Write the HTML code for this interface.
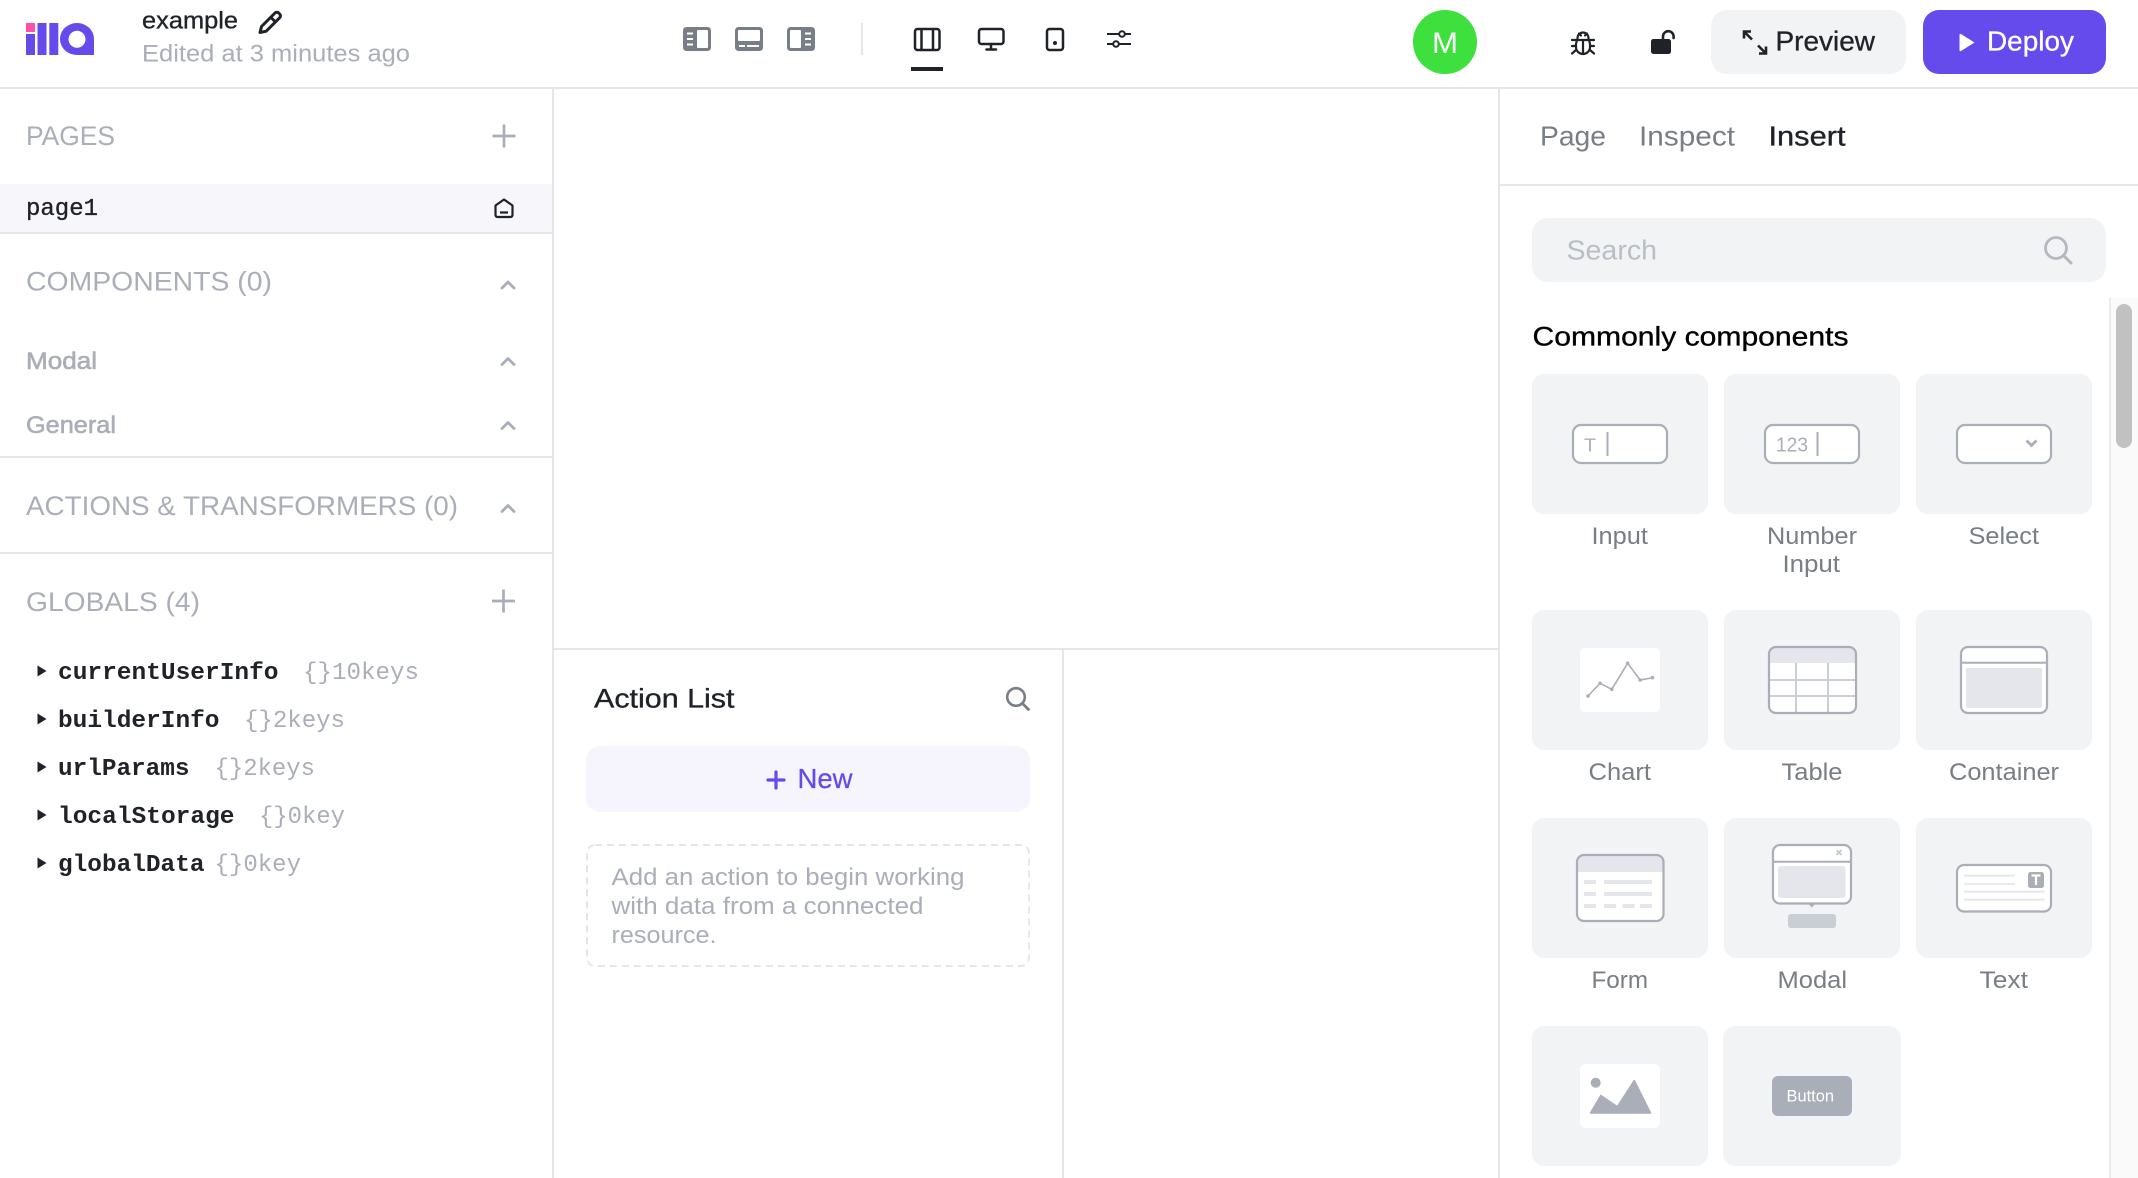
<!DOCTYPE html>
<html lang="en"><head><meta charset="utf-8"><title>example</title>
<style>
html,body{margin:0;padding:0;background:#fff;width:2138px;height:1178px;overflow:hidden}
svg{display:block}
text{font-family:"Liberation Sans",sans-serif;font-size:24.5px;fill:#1f2329;white-space:pre}
.m{font-family:"Liberation Mono",monospace;font-size:24px}
.g{fill:#a9aeb8}.d{fill:#787e85}
.b{fill:#a9aeb8;stroke:#a9aeb8;stroke-width:.6}
.s{font-size:26.5px}
.t{font-size:27.5px}
.md{stroke:#1f2329;stroke-width:.35}
.ln{fill:none;stroke:#a9aeb8;stroke-width:2.7;stroke-linejoin:round}
.ch{fill:none;stroke:#a9aeb8;stroke-width:2.8;stroke-linecap:round;stroke-linejoin:round}
.k{fill:none;stroke:#1f2329;stroke-width:2.5;stroke-linecap:round;stroke-linejoin:round}
.card{fill:#f2f3f5}
.o{fill:#fff;stroke:#a9aeb8;stroke-width:2.2}
</style></head><body>
<svg width="2138" height="1178" viewBox="0 0 2138 1178" xmlns="http://www.w3.org/2000/svg">
<rect width="2138" height="1178" fill="#fff"/>

<!-- structural lines -->
<rect x="0" y="87" width="2138" height="2" fill="#e5e6eb"/>
<rect x="552" y="89" width="2" height="1089" fill="#e5e6eb"/>
<rect x="1498" y="89" width="2" height="1089" fill="#e5e6eb"/>
<rect x="554" y="648" width="944" height="2" fill="#e5e6eb"/>
<rect x="1062" y="650" width="2" height="528" fill="#e5e6eb"/>
<rect x="1500" y="184" width="638" height="2" fill="#e5e6eb"/>
<rect x="0" y="456" width="552" height="2" fill="#e5e6eb"/>
<rect x="0" y="552" width="552" height="2" fill="#e5e6eb"/>

<!-- logo -->
<rect x="26" y="23" width="9" height="9" fill="#fc4fa8"/>
<rect x="26" y="34" width="9" height="21" fill="#654aec"/>
<rect x="37.500" y="23" width="9" height="32" fill="#654aec"/>
<rect x="49.300" y="23" width="9" height="32" fill="#654aec"/>
<path d="M77 23a17 16 0 0 1 17 16v16H77a17 16 0 0 1 0-32z" fill="#654aec"/>
<circle cx="77" cy="39.300" r="8.500" fill="#fff"/>

<!-- title -->
<text x="142" y="28.500" class="md" textLength="96" lengthAdjust="spacingAndGlyphs">example</text>
<text x="142" y="61.500" class="g" textLength="268" lengthAdjust="spacingAndGlyphs">Edited at 3 minutes ago</text>
<path d="M261.500 26.500l13.500-13.500a2.600 2.600 0 0 1 3.700 0l1 1a2.600 2.600 0 0 1 0 3.700l-13.500 13.500-6.200 1.300zM271 17.500l5 5" fill="none" stroke="#1f2329" stroke-width="3" stroke-linejoin="round"/>

<!-- layout toggles -->
<g>
<rect x="683" y="27" width="28" height="24" rx="3.500" fill="#787e85"/>
<rect x="697" y="30" width="11" height="18" rx="1" fill="#fff"/>
<path d="M687 33.500h6M687 39h6M687 44.500h6" stroke="#fff" stroke-width="2"/>
<rect x="735" y="27" width="28" height="24" rx="3.500" fill="#787e85"/>
<rect x="738" y="30" width="22" height="11" rx="1" fill="#fff"/>
<path d="M739 46h6M747 46h12" stroke="#fff" stroke-width="2"/>
<rect x="787" y="27" width="28" height="24" rx="3.500" fill="#787e85"/>
<rect x="790" y="30" width="11" height="18" rx="1" fill="#fff"/>
<path d="M805 33.500h6M805 39h6M805 44.500h6" stroke="#fff" stroke-width="2"/>
</g>
<rect x="861" y="23" width="2" height="32" fill="#e5e6eb"/>

<!-- viewport icons -->
<rect x="915" y="29" width="24.500" height="21" rx="2.500" class="k"/>
<path d="M921.500 29v21M933 29v21" class="k" style="stroke-linecap:butt"/>
<rect x="911" y="67" width="32" height="4" fill="#1f2329"/>
<rect x="979" y="29" width="24.500" height="15" rx="2.500" class="k"/>
<path d="M991 44v5M986.500 49.500h9.500" class="k"/>
<rect x="1047" y="29" width="16" height="21" rx="2.500" class="k"/>
<circle cx="1055" cy="43" r="2" fill="#1f2329"/>
<path d="M1107 34h12M1125 34h6M1107 44h6M1119 44h12" stroke="#1f2329" stroke-width="2"/>
<circle cx="1122" cy="34" r="2.800" fill="#fff" stroke="#1f2329" stroke-width="2"/>
<circle cx="1116" cy="44" r="2.800" fill="#fff" stroke="#1f2329" stroke-width="2"/>

<!-- avatar -->
<circle cx="1445" cy="42" r="32" fill="#3ee03e"/>
<text x="1432" y="53" textLength="26" lengthAdjust="spacingAndGlyphs" style="font-size:30px;fill:#fff">M</text>

<!-- bug -->
<g fill="none" stroke="#1f2329" stroke-width="2.200" stroke-linecap="round" stroke-linejoin="round">
<path d="M1577.500 40v-2a5.500 5.500 0 0 1 11 0v2"/>
<path d="M1577 40h12l1 4v3a7 7 0 0 1-14 0v-3z"/>
<path d="M1583 40v13M1572 40h5M1589 40h5M1572 46h4M1590 46h4M1576 50l-4 3.500M1590 50l4 3.500M1579 33.500l2 2M1587 33.500l-2 2"/>
</g>

<!-- lock -->
<rect x="1651" y="39" width="20" height="15" rx="2.500" fill="#1f2329"/>
<path d="M1663 39.500v-3a5.300 5.300 0 0 1 10.600 0v1.500" fill="none" stroke="#1f2329" stroke-width="2.600" stroke-linecap="round"/>

<!-- preview -->
<rect x="1711" y="10" width="195" height="64" rx="16" fill="#f2f3f5"/>
<path d="M1744 31.500l8 8M1744 38.500v-7h7M1766 53.500l-8-8M1766 46.500v7h-7" fill="none" stroke="#1f2329" stroke-width="2.600"/>
<text x="1775.500" y="50.500" class="t md" textLength="99.500" lengthAdjust="spacingAndGlyphs">Preview</text>

<!-- deploy -->
<rect x="1923" y="10" width="183" height="64" rx="16" fill="#654aec"/>
<path d="M1959.500 35a1 1 0 0 1 1.500-1l13.500 8.500-13.500 8.500a1 1 0 0 1-1.500-1z" fill="#fff"/>
<text x="1987" y="50.500" class="t" style="fill:#fff;stroke:#fff;stroke-width:.3" textLength="87" lengthAdjust="spacingAndGlyphs">Deploy</text>

<!-- left panel -->
<text x="26" y="145" class="g s" textLength="89" lengthAdjust="spacingAndGlyphs">PAGES</text>
<path d="M504 124.500v23M492.500 136h23" class="ln"/>
<rect x="0" y="184" width="552" height="48" fill="#f6f6fb"/>
<rect x="0" y="232" width="552" height="2" fill="#e5e6eb"/>
<text x="26" y="215" class="m md" textLength="72" lengthAdjust="spacingAndGlyphs">page1</text>
<path d="M495.500 205.500l8.500-6 8.500 6v9.500a2 2 0 0 1-2 2h-13a2 2 0 0 1-2-2zM500 212.500h8" fill="none" stroke="#1f2329" stroke-width="2.200" stroke-linejoin="round"/>

<text x="26" y="290.500" class="g s" textLength="246" lengthAdjust="spacingAndGlyphs">COMPONENTS (0)</text>
<path d="M502 288l6-6 6 6" class="ch"/>
<text x="26" y="369" class="b" textLength="71" lengthAdjust="spacingAndGlyphs">Modal</text>
<path d="M502 364.500l6-6 6 6" class="ch"/>
<text x="26" y="433" class="b" textLength="90" lengthAdjust="spacingAndGlyphs">General</text>
<path d="M502 428.500l6-6 6 6" class="ch"/>
<text x="26" y="515" class="g s" textLength="432" lengthAdjust="spacingAndGlyphs">ACTIONS &amp; TRANSFORMERS (0)</text>
<path d="M502 511.500l6-6 6 6" class="ch"/>
<text x="26" y="611" class="g s" textLength="174" lengthAdjust="spacingAndGlyphs">GLOBALS (4)</text>
<path d="M503.500 589.500v23M492 601h23" class="ln"/>

<!-- globals -->
<g fill="#1f2329">
<path d="M37.500 665.500l9 5.500-9 5.500z"/><path d="M37.500 713.500l9 5.500-9 5.500z"/><path d="M37.500 761.500l9 5.500-9 5.500z"/><path d="M37.500 809.500l9 5.500-9 5.500z"/><path d="M37.500 857.500l9 5.500-9 5.500z"/>
</g>
<text x="58" y="679" class="m" style="font-weight:700" textLength="220.500" lengthAdjust="spacingAndGlyphs">currentUserInfo</text>
<text x="58" y="727" class="m" style="font-weight:700" textLength="161.500" lengthAdjust="spacingAndGlyphs">builderInfo</text>
<text x="58" y="775" class="m" style="font-weight:700" textLength="131.500" lengthAdjust="spacingAndGlyphs">urlParams</text>
<text x="58" y="823" class="m" style="font-weight:700" textLength="176.500" lengthAdjust="spacingAndGlyphs">localStorage</text>
<text x="58" y="871" class="m" style="font-weight:700" textLength="146.500" lengthAdjust="spacingAndGlyphs">globalData</text>
<text x="303" y="679" class="m g" textLength="116" lengthAdjust="spacingAndGlyphs">{}10keys</text>
<text x="244" y="727" class="m g" textLength="101" lengthAdjust="spacingAndGlyphs">{}2keys</text>
<text x="214.500" y="775" class="m g" textLength="100.500" lengthAdjust="spacingAndGlyphs">{}2keys</text>
<text x="259" y="823" class="m g" textLength="86" lengthAdjust="spacingAndGlyphs">{}0key</text>
<text x="214.500" y="871" class="m g" textLength="86.500" lengthAdjust="spacingAndGlyphs">{}0key</text>

<!-- action list -->
<text x="594" y="707.500" class="md" style="font-size:27px" textLength="140.500" lengthAdjust="spacingAndGlyphs">Action List</text>
<circle cx="1016" cy="697" r="8.800" fill="none" stroke="#787e85" stroke-width="2.600"/>
<path d="M1022.500 703.500l6 6" stroke="#787e85" stroke-width="2.800" stroke-linecap="round"/>
<rect x="586" y="746" width="444" height="66" rx="14" fill="#f6f4fd"/>
<path d="M776 772v16M768 780h16" stroke="#654aec" stroke-width="3.200" stroke-linecap="round"/>
<text x="797.500" y="788" class="t" style="fill:#654aec;stroke:#654aec;stroke-width:.3" textLength="55" lengthAdjust="spacingAndGlyphs">New</text>
<rect x="587" y="845" width="442" height="121" rx="8" fill="none" stroke="#e5e6eb" stroke-width="2" stroke-dasharray="7 5"/>
<text x="611.500" y="885" class="g" textLength="353" lengthAdjust="spacingAndGlyphs">Add an action to begin working</text>
<text x="611.500" y="914" class="g" textLength="312" lengthAdjust="spacingAndGlyphs">with data from a connected</text>
<text x="611.500" y="943" class="g" textLength="105" lengthAdjust="spacingAndGlyphs">resource.</text>

<!-- right tabs -->
<text x="1540" y="145.500" class="t d" textLength="66" lengthAdjust="spacingAndGlyphs">Page</text>
<text x="1639" y="145.500" class="t d" textLength="96" lengthAdjust="spacingAndGlyphs">Inspect</text>
<text x="1768.500" y="145.500" class="t md" textLength="77" lengthAdjust="spacingAndGlyphs">Insert</text>

<!-- search -->
<rect x="1532" y="218" width="574" height="64" rx="16" fill="#f2f3f5"/>
<text x="1566.500" y="259.500" class="t" style="fill:#b9bec6" textLength="90.500" lengthAdjust="spacingAndGlyphs">Search</text>
<circle cx="2056" cy="248" r="10.500" fill="none" stroke="#b4b8bf" stroke-width="2.800"/>
<path d="M2064 256l7 7" stroke="#b4b8bf" stroke-width="3" stroke-linecap="round"/>

<!-- scrollbar -->
<rect x="2109" y="298" width="29" height="880" fill="#fafafa"/>
<rect x="2109" y="298" width="2" height="880" fill="#ebebeb"/>
<rect x="2116" y="304" width="16" height="144" rx="8" fill="#c1c1c1"/>

<text x="1532.500" y="345.700" class="md" style="font-size:27px;fill:#000;stroke:#000" textLength="316" lengthAdjust="spacingAndGlyphs">Commonly components</text>

<!-- cards -->
<rect class="card" x="1532" y="374" width="176" height="140" rx="12"/>
<rect class="card" x="1724" y="374" width="176" height="140" rx="12"/>
<rect class="card" x="1916" y="374" width="176" height="140" rx="12"/>
<rect class="card" x="1532" y="610" width="176" height="140" rx="12"/>
<rect class="card" x="1724" y="610" width="176" height="140" rx="12"/>
<rect class="card" x="1916" y="610" width="176" height="140" rx="12"/>
<rect class="card" x="1532" y="818" width="176" height="140" rx="12"/>
<rect class="card" x="1724" y="818" width="176" height="140" rx="12"/>
<rect class="card" x="1916" y="818" width="176" height="140" rx="12"/>
<rect class="card" x="1532" y="1026" width="176" height="140" rx="12"/>
<rect class="card" x="1723" y="1026" width="178" height="140" rx="12"/>

<!-- labels -->
<text x="1591.500" y="544" class="d" textLength="56.500" lengthAdjust="spacingAndGlyphs">Input</text>
<text x="1767" y="544" class="d" textLength="90" lengthAdjust="spacingAndGlyphs">Number</text>
<text x="1782.500" y="572" class="d" textLength="57.500" lengthAdjust="spacingAndGlyphs">Input</text>
<text x="1968.500" y="544" class="d" textLength="70.500" lengthAdjust="spacingAndGlyphs">Select</text>
<text x="1588.500" y="780" class="d" textLength="62.500" lengthAdjust="spacingAndGlyphs">Chart</text>
<text x="1781.500" y="780" class="d" textLength="61" lengthAdjust="spacingAndGlyphs">Table</text>
<text x="1949" y="780" class="d" textLength="110" lengthAdjust="spacingAndGlyphs">Container</text>
<text x="1591.500" y="988" class="d" textLength="56.500" lengthAdjust="spacingAndGlyphs">Form</text>
<text x="1777.500" y="988" class="d" textLength="69.500" lengthAdjust="spacingAndGlyphs">Modal</text>
<text x="1979.500" y="988" class="d" textLength="48.500" lengthAdjust="spacingAndGlyphs">Text</text>

<!-- input icon -->
<rect class="o" x="1573" y="425" width="94" height="38" rx="8"/>
<text x="1584" y="451.500" style="font-size:18px;fill:#a9aeb8" textLength="12" lengthAdjust="spacingAndGlyphs">T</text>
<path d="M1607.500 432v24" stroke="#a9aeb8" stroke-width="2"/>
<!-- number icon -->
<rect class="o" x="1765" y="425" width="94" height="38" rx="8"/>
<text x="1776" y="451.500" style="font-size:20px;fill:#a9aeb8" textLength="32" lengthAdjust="spacingAndGlyphs">123</text>
<path d="M1817.500 432v24" stroke="#a9aeb8" stroke-width="2"/>
<!-- select icon -->
<rect class="o" x="1957" y="425" width="94" height="38" rx="8"/>
<path d="M2026.500 440.500l5 5 5-5" fill="none" stroke="#a9aeb8" stroke-width="2.800"/>

<!-- chart -->
<rect x="1580" y="648" width="80" height="64" rx="4" fill="#fff"/>
<path d="M1588 696l12-12.700 11.800 6 15.800-26 12.600 16.700 12.200-2.300" fill="none" stroke="#a9aeb8" stroke-width="1.600"/>
<g fill="#a9aeb8"><circle cx="1588" cy="696" r="1.800"/><circle cx="1600" cy="683.300" r="1.800"/><circle cx="1611.800" cy="689.300" r="1.800"/><circle cx="1627.600" cy="663.300" r="1.800"/><circle cx="1640.200" cy="680" r="1.800"/><circle cx="1652.400" cy="677.700" r="1.800"/></g>

<!-- table -->
<rect x="1769" y="647" width="87" height="66" rx="7" fill="#fff"/>
<path d="M1769 663v-9a7 7 0 0 1 7-7h73a7 7 0 0 1 7 7v9z" fill="#e5e6eb"/>
<path d="M1769 680h87M1769 696h87M1796 663v50M1828 663v50" stroke="#c4c8cf" stroke-width="1.800"/>
<rect x="1769" y="647" width="87" height="66" rx="7" fill="none" stroke="#a9aeb8" stroke-width="2.200"/>

<!-- container -->
<rect class="o" x="1961" y="647" width="86" height="66" rx="7"/>
<path d="M1961 662.700h86" stroke="#a9aeb8" stroke-width="2"/>
<rect x="1966" y="668" width="76" height="40" rx="2" fill="#e5e6eb"/>

<!-- form -->
<rect x="1577" y="855" width="86.500" height="66" rx="7" fill="#fff"/>
<path d="M1577 872v-10a7 7 0 0 1 7-7h72.500a7 7 0 0 1 7 7v10z" fill="#e5e6eb"/>
<rect x="1577" y="855" width="86.500" height="66" rx="7" fill="none" stroke="#a9aeb8" stroke-width="2.200"/>
<g fill="#e5e6eb">
<rect x="1584" y="880" width="12" height="4"/><rect x="1604" y="880" width="48" height="4"/>
<rect x="1584" y="892" width="12" height="4"/><rect x="1604" y="892" width="48" height="4"/>
<rect x="1584" y="904" width="12" height="4"/><rect x="1604" y="904" width="12" height="4"/><rect x="1622.500" y="904" width="12" height="4"/><rect x="1640" y="904" width="12" height="4"/>
</g>

<!-- modal -->
<rect class="o" x="1773" y="845" width="78" height="58.500" rx="7"/>
<path d="M1773 861.700h78" stroke="#a9aeb8" stroke-width="2"/>
<path d="M1836.500 850l5 5M1841.500 850l-5 5" stroke="#c4c8cf" stroke-width="1.800"/>
<rect x="1778" y="866" width="67.500" height="32" rx="3" fill="#e5e6eb"/>
<path d="M1809 904.500h5.500l-2.700 3z" fill="#a9aeb8"/>
<rect x="1788" y="914" width="48" height="14" rx="3" fill="#c9cdd4"/>

<!-- text -->
<rect class="o" x="1957" y="865" width="94" height="46.500" rx="7"/>
<path d="M1964 875.700h50.700M1964 884h50.700M1964 891.700h80.600M1964 899.700h80.600" stroke="#e5e6eb" stroke-width="1.800"/>
<rect x="2028" y="872" width="16" height="16" rx="2.500" fill="#a9aeb8"/>
<path d="M2031.500 875.500h9M2036 875.500v9.500" stroke="#fff" stroke-width="2.200"/>

<!-- image -->
<rect x="1580" y="1064" width="80" height="64" rx="6" fill="#fff"/>
<circle cx="1595.700" cy="1082.700" r="5" fill="#a9aeb8"/>
<path d="M1590.500 1113l10.300-17.500 16.600 11.200 16.900-26.200 16.200 32.500z" fill="#a9aeb8" stroke="#a9aeb8" stroke-width="1.500" stroke-linejoin="round"/>

<!-- button -->
<rect x="1772" y="1076" width="80" height="40" rx="6" fill="#a9aeb8"/>
<text x="1786.500" y="1101.500" style="font-size:17px;fill:#fff" textLength="47.500" lengthAdjust="spacingAndGlyphs">Button</text>
</svg>
</body></html>
